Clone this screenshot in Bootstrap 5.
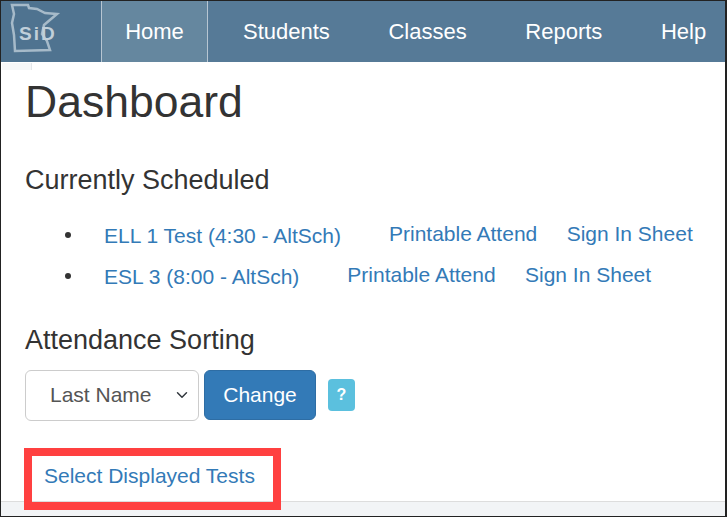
<!DOCTYPE html>
<html lang="en">
<head>
  <meta charset="UTF-8">
  <title>Dashboard</title>
  <link rel="stylesheet" href="https://cdn.jsdelivr.net/npm/bootstrap@5.3.0/dist/css/bootstrap.min.css" />
  <style>
    html, body { height: 100%; }
    body {
      font-family: "Liberation Sans", Arial, sans-serif;
      color: #333;
      overflow: hidden;
    }
    a { color: #337ab7; text-decoration: none; }
    .shot-frame {
      position: relative;
      height: 517px;
      border: 1px solid #222;
      border-right-width: 2px;
      display: flex;
      flex-direction: column;
    }
    .top-bar {
      height: 61px;
      background: #567a97;
      flex-wrap: nowrap;
    }
    .top-logo {
      width: 100px;
      background: #4f7390;
    }
    .top-link {
      color: #fff;
      font-size: 22px;
      line-height: 61px;
      white-space: nowrap;
    }
    .top-link.is-on {
      width: 107px;
      text-align: center;
      background: #65879f;
      border-left: 1px solid #b7c6d2;
      border-right: 1px solid #b7c6d2;
    }
    .top-links { gap: 58.6px; margin-left: 35px; }
    .bar-tick {
      position: absolute;
      left: 1px; top: 62px;
      width: 30px; height: 7px;
      background: #f6f7f8;
      border-right: 1px solid #e4e7ea;
    }
    .dash-body { padding: 0 24px; flex: 1; }
    .dash-title { font-size: 44.5px; font-weight: 400; line-height: 1; margin: 18px 0 0; }
    .dash-sub { font-size: 27px; font-weight: 400; line-height: 32px; margin: 0; }
    .sub-sched { margin-top: 39px; }
    .sub-sort { margin-top: 28px; }
    .sched-list { list-style: none; margin: 18px 0 0; padding: 0 0 0 40px; font-size: 21px; }
    .sched-row { height: 41px; display: flex; align-items: center; position: relative; }
    .sched-row::before {
      content: "";
      position: absolute;
      left: 0; top: 18px;
      width: 6px; height: 6px;
      border-radius: 50%;
      background: #333;
    }
    .sched-name { margin-left: 39px; position: relative; top: 2px; }
    .sched-print { margin-left: 48px; }
    .sched-sign { margin-left: 29.4px; }
    .sort-row { margin-top: 14px; }
    .sort-pick.form-select {
      width: 174px;
      height: 51px;
      font-size: 21px;
      color: #555;
      padding-left: 24px;
      border-color: #ccc;
      border-radius: 6px;
      background-position: right 8px center;
    }
    .sort-go.btn {
      width: 112px;
      height: 50px;
      font-size: 21px;
      color: #fff;
      background: #337ab7;
      border-color: #2e6da4;
      border-radius: 6px;
      margin-left: 5px;
    }
    .sort-help {
      width: 27px;
      height: 32px;
      margin-left: 12px;
      background: #5bc0de;
      color: #fff;
      font-size: 16px;
      font-weight: 700;
      border-radius: 4px;
      display: flex;
      align-items: center;
      justify-content: center;
    }
    .pick-tests {
      position: relative;
      margin-top: 22px;
      font-size: 21px;
      line-height: 23px;
      padding: 21px 0 0 19px;
    }
    .red-box {
      position: absolute;
      left: -1px; top: 5px;
      width: 257px; height: 62px;
      border: 8px solid #ff4040;
    }
    .foot-strip {
      height: 15px;
      background: #f2f4f6;
      border-top: 1px solid #ddd;
    }
  </style>
</head>
<body>
  <div class="shot-frame">
    <nav class="top-bar d-flex align-items-stretch">
      <a class="top-logo d-block" href="#" aria-label="SiD">
        <svg width="100" height="61" viewBox="0 0 100 61">
          <path d="M11 4 L27 4 L28 7 L36 8 L44 12 L56 13 L43 24 L41 33 L46 40 L49 49 L14 50 L13 34 L11 22 L13 13 Z" fill="none" stroke="#a6bac9" stroke-width="2.5"/>
          <text x="18" y="39" font-size="19" font-weight="700" fill="#c0cfda" letter-spacing="2">SiD</text>
        </svg>
      </a>
      <a class="top-link is-on" href="#">Home</a>
      <div class="top-links d-flex">
        <a class="top-link" href="#">Students</a>
        <a class="top-link" href="#">Classes</a>
        <a class="top-link" href="#">Reports</a>
        <a class="top-link" href="#">Help</a>
      </div>
    </nav>
    <span class="bar-tick"></span>
    <main class="dash-body">
      <h1 class="dash-title">Dashboard</h1>
      <h2 class="dash-sub sub-sched">Currently Scheduled</h2>
      <ul class="sched-list">
        <li class="sched-row">
          <a class="sched-name" href="#">ELL 1 Test (4:30 - AltSch)</a>
          <a class="sched-print" href="#">Printable Attend</a>
          <a class="sched-sign" href="#">Sign In Sheet</a>
        </li>
        <li class="sched-row">
          <a class="sched-name" href="#">ESL 3 (8:00 - AltSch)</a>
          <a class="sched-print" href="#">Printable Attend</a>
          <a class="sched-sign" href="#">Sign In Sheet</a>
        </li>
      </ul>
      <h2 class="dash-sub sub-sort">Attendance Sorting</h2>
      <div class="sort-row d-flex align-items-center">
        <select class="form-select sort-pick"><option>Last Name</option></select>
        <button class="btn sort-go" type="button">Change</button>
        <span class="sort-help">?</span>
      </div>
      <div class="pick-tests">
        <a href="#">Select Displayed Tests</a>
        <span class="red-box"></span>
      </div>
    </main>
    <div class="foot-strip"></div>
  </div>
</body>
</html>
